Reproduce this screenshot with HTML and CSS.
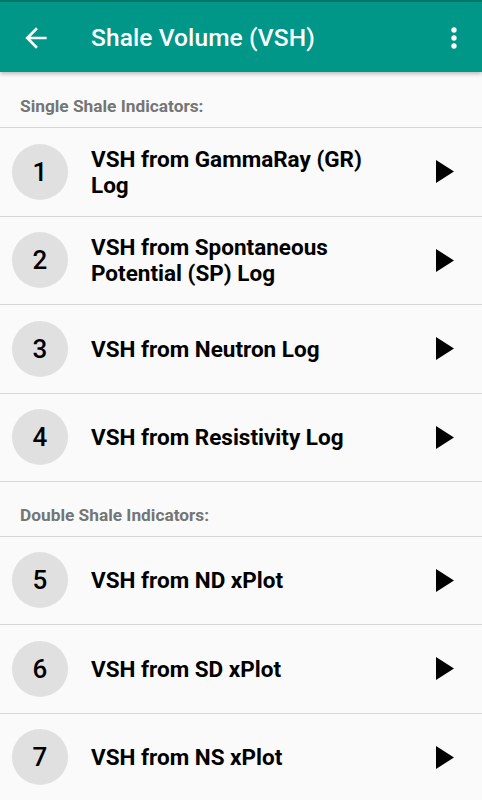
FILE: index.html
```html
<!DOCTYPE html>
<html lang="en">
<head>
<meta charset="utf-8">
<title>Shale Volume (VSH)</title>
<link rel="stylesheet" href="styles.css">
</head>
<body>
<div class="status"></div>
<header class="toolbar">
  <svg class="back" viewBox="0 0 24 24" width="32" height="32"><path d="M20 11H7.83l5.59-5.59L12 4l-8 8 8 8 1.41-1.41L7.83 13H20v-2z" fill="#fff"/></svg>
  <h1 class="title">Shale Volume (VSH)</h1>
  <svg class="more" viewBox="0 0 24 24" width="32" height="32"><circle cx="12" cy="6" r="2" fill="#fff"/><circle cx="12" cy="12" r="2" fill="#fff"/><circle cx="12" cy="18" r="2" fill="#fff"/></svg>
</header>
<main class="content">
  <div class="section">Single Shale Indicators:</div>
  <div class="row"><div class="num">1</div><div class="label">VSH from GammaRay (GR)<br>Log</div><svg class="play" viewBox="8 5 11 14" width="18" height="23"><path d="M8 5v14l11-7z"/></svg></div>
  <div class="row"><div class="num">2</div><div class="label">VSH from Spontaneous<br>Potential (SP) Log</div><svg class="play" viewBox="8 5 11 14" width="18" height="23"><path d="M8 5v14l11-7z"/></svg></div>
  <div class="row"><div class="num">3</div><div class="label">VSH from Neutron Log</div><svg class="play" viewBox="8 5 11 14" width="18" height="23"><path d="M8 5v14l11-7z"/></svg></div>
  <div class="row"><div class="num">4</div><div class="label">VSH from Resistivity Log</div><svg class="play" viewBox="8 5 11 14" width="18" height="23"><path d="M8 5v14l11-7z"/></svg></div>
  <div class="section second">Double Shale Indicators:</div>
  <div class="row"><div class="num">5</div><div class="label">VSH from ND xPlot</div><svg class="play" viewBox="8 5 11 14" width="18" height="23"><path d="M8 5v14l11-7z"/></svg></div>
  <div class="row"><div class="num">6</div><div class="label">VSH from SD xPlot</div><svg class="play" viewBox="8 5 11 14" width="18" height="23"><path d="M8 5v14l11-7z"/></svg></div>
  <div class="row"><div class="num">7</div><div class="label">VSH from NS xPlot</div><svg class="play" viewBox="8 5 11 14" width="18" height="23"><path d="M8 5v14l11-7z"/></svg></div>
</main>
</body>
</html>
```
FILE: styles.css
```css
* { box-sizing: border-box; }
html, body {
  margin: 0;
  padding: 0;
  background: #fafafa;
  font-family: Roboto, "Liberation Sans", Arial, sans-serif;
  overflow: hidden;
  height: 800px;
}
.status {
  height: 2px;
  background: #00796b;
}
.toolbar {
  position: relative;
  z-index: 2;
  height: 70px;
  background: #009688;
  display: flex;
  align-items: center;
  padding: 0 12px 0 20px;
  box-shadow: 0 2px 4px rgba(0,0,0,0.25);
}
.back { flex: none; margin-top: 2px; }
.title {
  flex: 1;
  margin: 0 0 0 39px;
  color: #fff;
  font-size: 24.5px;
  font-weight: 500;
  letter-spacing: 0.1px;
}
.more { flex: none; margin-top: 2px; }
.content { display: flex; flex-direction: column; }
.section {
  height: 56px;
  padding: 24px 0 0 20px;
  line-height: 20px;
  font-size: 17.3px;
  font-weight: 700;
  color: #757575;
  border-bottom: 1px solid #d6d6d6;
}
.section.second { height: 54.5px; padding-top: 23px; }
.row {
  height: 88.5px;
  display: flex;
  align-items: center;
  padding: 0 28px 0 12px;
  border-bottom: 1px solid #d6d6d6;
}
.num {
  flex: none;
  width: 56px;
  height: 56px;
  border-radius: 50%;
  background: #e0e0e0;
  display: flex;
  align-items: center;
  justify-content: center;
  font-size: 26px;
  font-weight: 500;
  color: #000;
}
.label {
  flex: 1;
  margin-left: 23px;
  font-size: 22.5px;
  font-weight: 700;
  line-height: 26px;
  color: #000;
}
.play { flex: none; fill: #000; }
```
